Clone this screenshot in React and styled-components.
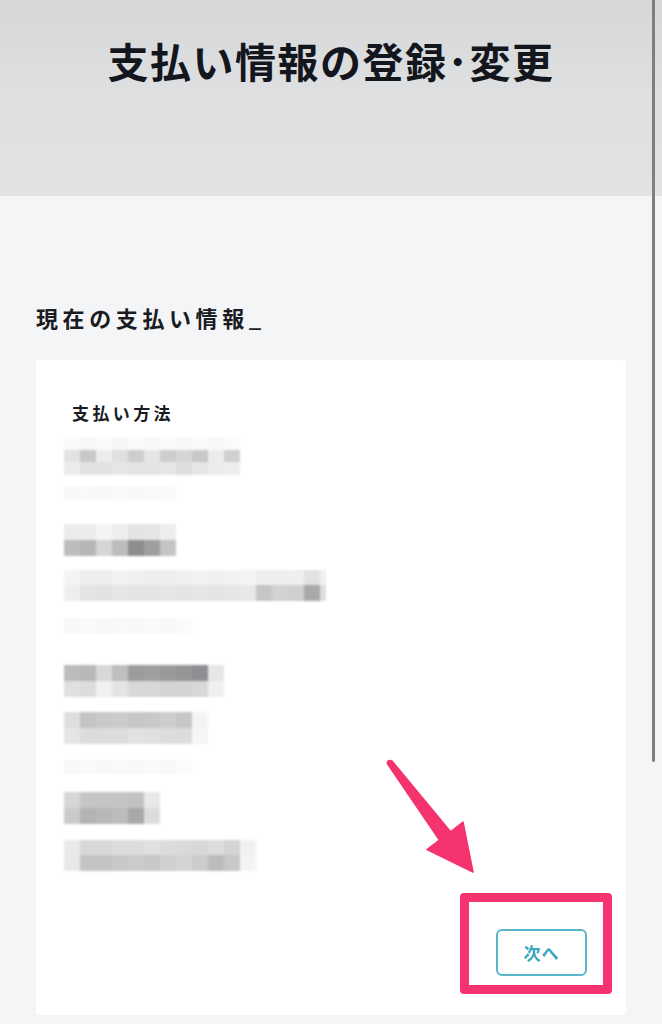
import React from "react";
import styled, { createGlobalStyle } from "styled-components";

const Global = createGlobalStyle`
  html, body { margin: 0; padding: 0; background: #f3f5f7; }
  body { font-family: "Noto Sans CJK JP", "Noto Sans", sans-serif; overflow: hidden; }
`;

const Page = styled.div`
  position: relative;
  width: 662px;
  height: 1024px;
  overflow: hidden;
  background: #f3f5f7;
`;

const Header = styled.header`
  height: 196px;
  box-sizing: border-box;
  padding-top: 40px;
  background: linear-gradient(180deg, #d6d7d9 0%, #dedfe1 45%, #e2e3e5 100%);
  display: flex;
  justify-content: center;
  align-items: flex-start;
`;

const Title = styled.h1`
  margin: 0;
  font-size: 41px;
  line-height: 1;
  font-weight: 700;
  color: #14161d;
  letter-spacing: 1.5px;
`;

const Main = styled.main`
  padding: 110px 36px 0 36px;
  display: flex;
  flex-direction: column;
`;

const SectionTitle = styled.h2`
  margin: 0 0 32px 0;
  font-size: 22px;
  line-height: 1;
  font-weight: 700;
  color: #1a1c22;
  letter-spacing: 4.6px;
`;

const Card = styled.section`
  background: #ffffff;
  border-radius: 4px;
  padding: 44px 39px 39px 36px;
  display: flex;
  flex-direction: column;
`;

const Label = styled.h3`
  margin: 0;
  font-size: 17px;
  line-height: 1;
  font-weight: 700;
  color: #1a1c22;
  letter-spacing: 3.4px;
`;

const Fields = styled.div`
  margin-left: -8px;
  display: flex;
  flex-direction: column;
  filter: blur(1px);
`;

const Block = styled.div`
  margin-top: ${(p) => p.$mt}px;
  display: flex;
  flex-direction: column;
`;

const CellRow = styled.div`
  display: flex;
  height: ${(p) => p.$h}px;
`;

const Cell = styled.span`
  width: ${(p) => p.$w || 16}px;
  height: 100%;
  background: ${(p) => p.$c};
`;

const ButtonRow = styled.div`
  margin-top: 58px;
  display: flex;
  justify-content: flex-end;
`;

const NextButton = styled.button`
  width: 91px;
  height: 47px;
  box-sizing: border-box;
  border: 2px solid #5cb6c9;
  border-radius: 6px;
  background: #ffffff;
  color: #35a5c1;
  font-family: "Noto Sans CJK JP", "Noto Sans", sans-serif;
  font-size: 17px;
  font-weight: 700;
  letter-spacing: 1px;
  padding: 0;
  cursor: pointer;
`;

const Highlight = styled.div`
  position: absolute;
  left: 460px;
  top: 893px;
  width: 152px;
  height: 101px;
  box-sizing: border-box;
  border: 9px solid #f5336e;
  border-radius: 4px;
  pointer-events: none;
`;

const ArrowSvg = styled.svg`
  position: absolute;
  left: 0;
  top: 0;
  pointer-events: none;
`;

const ScrollIndicator = styled.div`
  position: absolute;
  left: 652px;
  top: 0;
  width: 3px;
  height: 762px;
  border-radius: 0 0 2px 2px;
  background: #7f7f7f;
`;

const blocks = [
  {
    mt: 16,
    rows: [
      { h: 13, c: ["#fafafa", "#f7f7f7", "#fafafa", "#f6f6f6", "#fafafa", "#f8f8f8", "#fafafa", "#f7f7f7", "#fafafa", "#f8f8f8", "#fbfbfb"] },
      { h: 12, c: ["#e2e2e2", "#c8c8c8", "#ececec", "#e0e0e0", "#cdcdcd", "#e6e6e6", "#cdcdcd", "#d6d6d6", "#c8c8c8", "#ececec", "#d0d0d0"] },
      { h: 13, c: ["#ececec", "#e2e2e2", "#e2e2e2", "#e6e6e6", "#e4e4e4", "#e4e4e4", "#e6e6e6", "#dedede", "#e6e6e6", "#ececec", "#eeeeee"] },
    ],
  },
  {
    mt: 11,
    rows: [{ h: 14, c: ["#f8f8f8", "#f9f9f9", "#f7f7f7", "#fafafa", "#f8f8f8", "#f9f9f9", "#fafafa"] }],
  },
  {
    mt: 24,
    rows: [
      { h: 16, c: ["#ececec", "#ececec", "#f5f5f5", "#eeeeee", "#e4e4e4", "#e6e6e6", "#eeeeee"] },
      { h: 16, c: ["#bdbdbd", "#b6b6b6", "#d6d6d6", "#bcbcbc", "#8e8e8e", "#9e9e9e", "#c4c4c4"] },
    ],
  },
  {
    mt: 14,
    rows: [
      { h: 15, c: ["#f4f4f4", "#eeeeee", "#eeeeee", "#f2f2f2", "#f0f0f0", "#eeeeee", "#eeeeee", "#f0f0f0", "#f2f2f2", "#f0f0f0", "#f2f2f2", "#f4f4f4", "#eeeeee", "#eeeeee", "#efefef", "#e2e2e2", "#f0f0f0"] },
      { h: 16, c: ["#eeeeee", "#e4e4e4", "#e2e2e2", "#e6e6e6", "#e4e4e4", "#e4e4e4", "#e6e6e6", "#e4e4e4", "#e6e6e6", "#e4e4e4", "#e6e6e6", "#e8e8e8", "#c6c6c6", "#d2d2d2", "#d0d0d0", "#a9a9a9", "#dddddd"] },
    ],
    last: 6,
  },
  {
    mt: 17,
    rows: [{ h: 16, c: ["#f8f8f8", "#fafafa", "#f7f7f7", "#f9f9f9", "#f8f8f8", "#fafafa", "#f8f8f8", "#fbfbfb"] }],
  },
  {
    mt: 31,
    rows: [
      { h: 16, c: ["#bcbcbc", "#b8b8b8", "#d8d8d8", "#bfbfbf", "#9c9c9c", "#a0a0a0", "#9a9a9a", "#959595", "#8e8e93", "#e6e6e6"] },
      { h: 16, c: ["#e0e0e0", "#dcdcdc", "#f0f0f0", "#e4e4e4", "#d8d8d8", "#d8d8d8", "#d4d4d4", "#d4d4d4", "#d8d8d8", "#f0f0f0"] },
    ],
  },
  {
    mt: 15,
    rows: [
      { h: 16, c: ["#dedede", "#c4c4c4", "#cacaca", "#cbcbcb", "#c6c6c6", "#c8c8c8", "#cdcdcd", "#c6c6c6", "#f4f4f4"] },
      { h: 16, c: ["#e6e6e6", "#dcdcdc", "#dcdcdc", "#dcdcdc", "#e2e2e2", "#e0e0e0", "#dcdcdc", "#dcdcdc", "#f6f6f6"] },
    ],
  },
  {
    mt: 16,
    rows: [{ h: 14, c: ["#f8f8f8", "#fafafa", "#f7f7f7", "#f9f9f9", "#f8f8f8", "#fafafa", "#f8f8f8", "#fbfbfb"] }],
  },
  {
    mt: 18,
    rows: [
      { h: 16, c: ["#d6d6d6", "#c6c6c6", "#c4c4c4", "#c4c4c4", "#c2c2c2", "#e8e8e8"] },
      { h: 16, c: ["#cacaca", "#b4b4b4", "#b8b8b8", "#bcbcbc", "#a8a8a8", "#dcdcdc"] },
    ],
  },
  {
    mt: 16,
    rows: [
      { h: 15, c: ["#eaeaea", "#d8d8d8", "#d8d8d8", "#dcdcdc", "#dcdcdc", "#e0e0e0", "#dcdcdc", "#dadada", "#d8d8d8", "#dcdcdc", "#d4d4d4", "#f0f0f0"] },
      { h: 16, c: ["#e8e8e8", "#c4c4c4", "#c4c4c4", "#c8c8c8", "#cccccc", "#c8c8c8", "#d0d0d0", "#d4d4d4", "#cccccc", "#bcbcbc", "#c8c8c8", "#f4f4f4"] },
    ],
  },
];

function Mosaic({ block }) {
  return (
    <Block $mt={block.mt}>
      {block.rows.map((row, i) => (
        <CellRow key={i} $h={row.h}>
          {row.c.map((c, j) => (
            <Cell key={j} $c={c} $w={block.last && j === row.c.length - 1 ? block.last : 16} />
          ))}
        </CellRow>
      ))}
    </Block>
  );
}

export default function App() {
  return (
    <>
      <Global />
      <Page>
        <Header>
          <Title>支払い情報の登録･変更</Title>
        </Header>
        <Main>
          <SectionTitle>現在の支払い情報_</SectionTitle>
          <Card>
            <Label>支払い方法</Label>
            <Fields>
              {blocks.map((b, i) => (
                <Mosaic key={i} block={b} />
              ))}
            </Fields>
            <ButtonRow>
              <NextButton>次へ</NextButton>
            </ButtonRow>
          </Card>
        </Main>
        <ArrowSvg width="662" height="1024" viewBox="0 0 662 1024">
          <path
            d="M392 761 L450.6 831.8 L463 822 L473 872 L427 849.5 L439.4 840.2 L388 764.6 Q386 761 390 760.6 Z"
            fill="#f5336e"
            stroke="#f5336e"
            strokeWidth="1.5"
            strokeLinejoin="round"
          />
        </ArrowSvg>
        <Highlight />
        <ScrollIndicator />
      </Page>
    </>
  );
}
